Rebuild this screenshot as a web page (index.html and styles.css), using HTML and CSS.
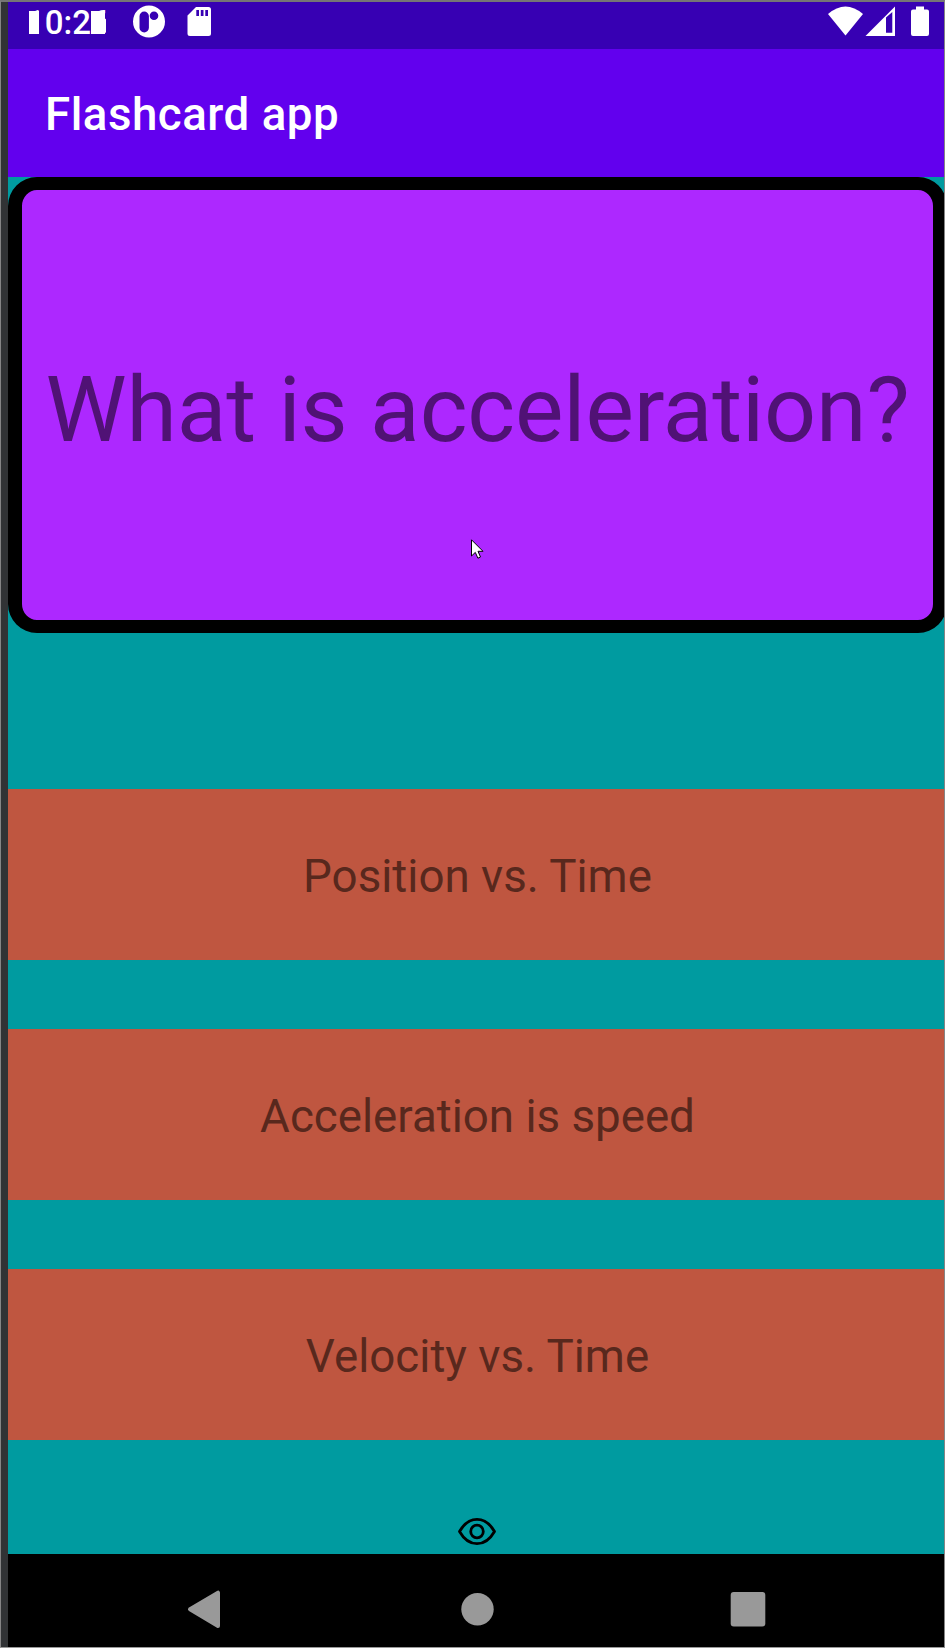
FILE: index.html
```html
<!DOCTYPE html>
<html lang="en">
<head>
<meta charset="utf-8">
<title>Flashcard app</title>
<link rel="stylesheet" href="styles.css">
</head>
<body>
<div class="device">
  <header class="status">
    <div class="clock">10:26<span class="block block-first"></span><span class="block block-last"></span></div>
    <svg class="status-icons" width="90" height="47" viewBox="130 2 90 47">
      <path fill="#fff" fill-rule="evenodd" d="M149 5.500a16 16 0 1 0 0 32a16 16 0 1 0 0-32zM144.200 11.500a4.700 4.700 0 0 1 4.700 4.700v11.500a4.700 4.700 0 0 1-9.400 0v-11.500a4.700 4.700 0 0 1 4.700-4.700zM154 11.500a4.300 4.300 0 1 0 0 8.600a4.300 4.300 0 1 0 0-8.600z"/>
      <path fill="#fff" fill-rule="evenodd" d="M196 7h12.500q2.500 0 2.500 2.500v24q0 2.500-2.500 2.500h-18.500q-2.500 0-2.500-2.500v-18zM196.300 10v6h2.700v-6zM200.800 10v6h2.700v-6zM205.300 10v6h2.700v-6z"/>
    </svg>
    <svg class="signal-icons" width="110" height="47" viewBox="825 2 110 47">
      <path fill="#fff" d="M828 14Q845.500-1 863 14L845.500 35.500z"/>
      <path fill="#fff" fill-rule="evenodd" d="M865.500 36L895 6.500V36zM886 17.500V32.800h6.300V12z"/>
      <path fill="#fff" d="M916 6.500h8V9.500h3q2 0 2 2V34q0 2-2 2h-14q-2 0-2-2V11.500q0-2 2-2h3z"/>
    </svg>
  </header>
  <div class="appbar">Flashcard app</div>
  <main class="content">
    <div class="card">What is acceleration?</div>
    <div class="answers">
      <div class="answer">Position vs. Time</div>
      <div class="answer">Acceleration is speed</div>
      <div class="answer">Velocity vs. Time</div>
    </div>
    <svg class="eye" width="40" height="30" viewBox="0 0 40 30" fill="none" stroke="#000" stroke-width="2.800" stroke-linejoin="round">
      <path d="M2.500 14.500Q9.500 2.300 20 2.300T37.500 14.500Q30.500 26.700 20 26.700T2.500 14.500z"/>
      <circle cx="20" cy="14.500" r="6.300"/>
    </svg>
  </main>
  <nav class="nav">
    <svg width="936" height="93" viewBox="8 1554 936 93" fill="#999">
      <path d="M190 1609.300L218 1592.700V1626z" stroke="#999" stroke-width="4" stroke-linejoin="round"/>
      <circle cx="477.500" cy="1609.300" r="16.200"/>
      <rect x="730.700" y="1592" width="34.600" height="34.400" rx="3"/>
    </svg>
  </nav>
</div>
<svg class="cursor" width="14" height="22" viewBox="0 0 14 22">
  <path fill="#fff" stroke="#000" stroke-width="1" d="M1.500 1.800V18l3.800-3.600 2.600 5.800 2.600-1.200-2.500-5.700h5z"/>
</svg>
</body>
</html>
```
FILE: styles.css
```css
* { box-sizing: border-box; }

body {
  margin: 0;
  width: 945px;
  height: 1648px;
  overflow: hidden;
  position: relative;
  background: #313335;
  border: 1px solid #858585;
  border-top: 2px solid #757575;
  border-bottom-color: #999;
  font-family: Roboto, sans-serif;
}

svg { display: block; }

.device {
  margin-left: 7px;
  width: 936px;
  height: 1645px;
  display: flex;
  flex-direction: column;
  overflow: hidden;
}

.status {
  flex: none;
  height: 47px;
  display: flex;
  background: #3700b3;
}

.clock {
  position: relative;
  width: 122px;
  padding-left: 18px;
  color: #fff;
  font-size: 33px;
  font-weight: 500;
  line-height: 41px;
  clip-path: inset(0 24px 0 21px);
}

.block {
  position: absolute;
  top: 9px;
  height: 23px;
  background: #fff;
}

.block-first { left: 21px; width: 10px; }
.block-last { left: 83px; width: 14px; }

.signal-icons { margin-left: auto; margin-right: 9px; }

.appbar {
  flex: none;
  height: 128px;
  padding: 3px 0 0 37px;
  background: #6200ee;
  color: #fff;
  font-size: 45.700px;
  font-weight: 500;
  letter-spacing: 0.5px;
  line-height: 125px;
}

.content {
  flex: none;
  height: 1377px;
  display: flex;
  flex-direction: column;
  align-items: flex-start;
  background: #009ba0;
}

.card {
  flex: none;
  width: 939px;
  height: 456px;
  padding-top: 10px;
  border: solid #000;
  border-width: 13px 14px;
  border-radius: 29px;
  background: #ad28ff;
  color: #501275;
  font-size: 91.400px;
  letter-spacing: -0.15px;
  line-height: 420px;
  text-align: center;
  white-space: nowrap;
}

.answers {
  width: 939px;
  margin-top: 156px;
  display: flex;
  flex-direction: column;
  gap: 69px;
}

.answer {
  height: 171px;
  padding-top: 4px;
  background: #bf5640;
  color: #58281d;
  font-size: 45.700px;
  line-height: 167px;
  text-align: center;
}

.eye { margin: 77px 0 0 449px; }

.nav {
  flex: none;
  height: 93px;
  background: #000;
}

.cursor {
  position: absolute;
  left: 469px;
  top: 536px;
}
```
